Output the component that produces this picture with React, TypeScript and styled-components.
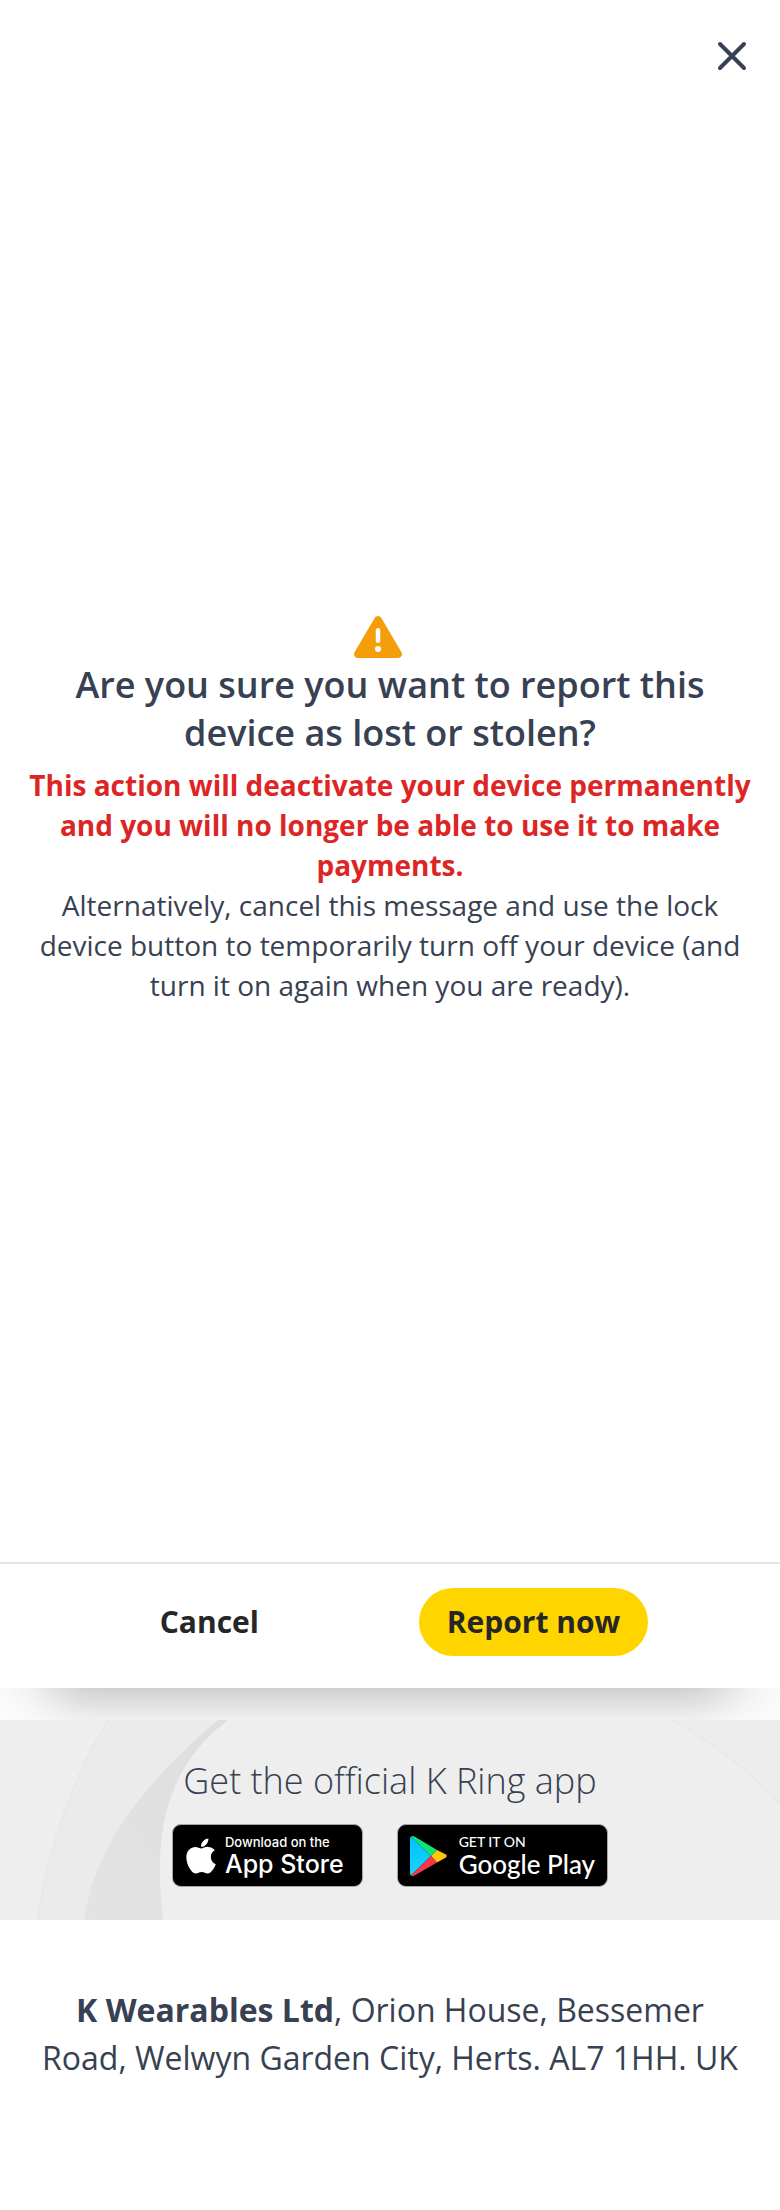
import React from "react";
import styled, { createGlobalStyle } from "styled-components";
import { FaApple } from "react-icons/fa";
import { FaTriangleExclamation } from "react-icons/fa6";

const GlobalStyle = createGlobalStyle`
  *, *::before, *::after { box-sizing: border-box; }
  body {
    margin: 0;
    background: #fff;
    color: #374151;
    font-family: "Open Sans", "Noto Sans", sans-serif;
  }
`;

const Page = styled.div`
  min-height: 100vh;
  display: flex;
  flex-direction: column;
`;

const Dialog = styled.section`
  position: relative;
  flex: 1;
  display: flex;
  flex-direction: column;
  background: #fff;
  box-shadow:
    0 68px 44px -56px rgba(0, 0, 0, 0.2),
    0 20px 64px 0 rgba(0, 0, 0, 0.07);
  clip-path: inset(0 0 -80px 0);
`;

const DialogHeader = styled.header`
  display: flex;
  justify-content: flex-end;
  padding: 32px 24px;
`;

const CloseButton = styled.button`
  display: flex;
  padding: 0;
  border: 0;
  background: none;
  color: #374151;
  cursor: pointer;
`;

const DialogBody = styled.div`
  flex: 1;
  display: flex;
  flex-direction: column;
  align-items: center;
  justify-content: center;
  padding: 0 24px 56px;
  text-align: center;
`;

const WarningIcon = styled(FaTriangleExclamation)`
  margin-right: 24px;
  color: #f59e0b;
`;

const Title = styled.h1`
  margin: 0 0 8px;
  padding: 0 32px;
  font-size: 36px;
  line-height: 48px;
  font-weight: 600;
`;

const Message = styled.p<{ $danger?: boolean }>`
  margin: 0;
  font-size: 28px;
  line-height: 40px;
  font-weight: ${(p) => (p.$danger ? 700 : 400)};
  color: ${(p) => (p.$danger ? "#dc2626" : "inherit")};
`;

const Actions = styled.footer`
  display: flex;
  justify-content: space-evenly;
  padding: 24px 0 32px;
  border-top: 2px solid #e5e5e5;
`;

const ActionButton = styled.button<{ $primary?: boolean }>`
  padding: 12px 28px;
  border: 0;
  border-radius: 34px;
  background: ${(p) => (p.$primary ? "#ffd500" : "transparent")};
  color: #262626;
  font-family: inherit;
  font-size: 30px;
  line-height: 44px;
  font-weight: 700;
  cursor: pointer;
`;

const AppBand = styled.section`
  position: relative;
  display: flex;
  flex-direction: column;
  align-items: center;
  gap: 15px;
  margin-top: 32px;
  padding: 33px 24px;
  background: #eee;
`;

const Backdrop = styled.svg`
  position: absolute;
  inset: 0;
  width: 100%;
  height: 100%;
`;

const BandTitle = styled.h2`
  position: relative;
  margin: 0;
  font-size: 36px;
  line-height: 56px;
  font-weight: 300;
`;

const Badges = styled.div`
  position: relative;
  display: flex;
  gap: 34px;
`;

type Store = "apple" | "google";

const Badge = styled.a<{ $store: Store }>`
  display: flex;
  align-items: center;
  gap: ${(p) => (p.$store === "apple" ? 4 : 11)}px;
  height: 63px;
  padding: ${(p) => (p.$store === "apple" ? "0 18px 0 8px" : "0 12px")};
  border: 1px solid #a6a6a6;
  border-radius: 9px;
  background: #000;
  color: #fff;
  font-family: ${(p) => (p.$store === "apple" ? "Inter" : "Lato")}, sans-serif;
  font-size: ${(p) => (p.$store === "apple" ? 13 : 14)}px;
  font-weight: 500;
  text-decoration: none;
`;

const BadgeText = styled.span`
  display: flex;
  flex-direction: column;
`;

const BadgeSmall = styled.span`
  line-height: 16px;
`;

const BadgeLarge = styled.span<{ $store: Store }>`
  font-size: ${(p) => (p.$store === "apple" ? 25 : 26)}px;
  line-height: 28px;
`;

const Address = styled.address`
  padding: 66px 32px 128px;
  font-size: 32px;
  line-height: 48px;
  font-style: normal;
  text-align: center;
`;

const CloseIcon = () => (
  <svg width="48" height="48" viewBox="0 0 24 24" fill="none" stroke="currentColor" strokeWidth="2" strokeLinecap="round" aria-hidden="true">
    <path d="M6 6l12 12M18 6L6 18" />
  </svg>
);

const PlayLogo = () => (
  <svg width="38" height="42" viewBox="0 0 38 42" aria-hidden="true">
    <defs>
      <linearGradient id="playBlue" x1="0" y1="0" x2="0" y2="1">
        <stop offset="0" stopColor="#00c3ff" />
        <stop offset="1" stopColor="#1bd1fb" />
      </linearGradient>
    </defs>
    <path d="M1 1.500Q0 2 0 4V38Q0 40 1 40.500L21 21Z" fill="url(#playBlue)" />
    <path d="M1 1.500Q2.500 .300 4.500 1.600L27 15L21 21Z" fill="#0be677" />
    <path d="M27 15L35.500 19.300Q38 21 35.500 22.700L27 27.500L21 21Z" fill="#ffc70a" />
    <path d="M1 40.500Q2.500 41.800 4.500 40.500L27 27.500L21 21Z" fill="#f9364a" />
  </svg>
);

const RingBackdrop = () => (
  <Backdrop viewBox="0 0 780 200" preserveAspectRatio="xMidYMid slice" aria-hidden="true">
    <defs>
      <linearGradient id="ringInner" x1="0" y1="1" x2="1" y2="0">
        <stop offset="0" stopColor="#e3e3e3" />
        <stop offset="1" stopColor="#dedede" />
      </linearGradient>
    </defs>
    <path d="M108 0C75 55 48 125 38 200H163C152 110 168 45 228 0Z" fill="#ebebeb" />
    <path d="M108 0C75 55 48 125 38 200" fill="none" stroke="#e8e8e8" strokeWidth="2" />
    <path d="M228 0C168 45 152 110 163 200H84C94 135 130 75 218 0Z" fill="url(#ringInner)" />
    <path d="M672 0Q735 35 780 84V0Z" fill="#ececec" />
    <path d="M672 0Q735 35 780 84" fill="none" stroke="#e9e9e9" strokeWidth="2" />
  </Backdrop>
);

export default function App() {
  return (
    <>
      <GlobalStyle />
      <Page>
        <Dialog role="dialog" aria-labelledby="dialog-title">
          <DialogHeader>
            <CloseButton type="button" aria-label="Close">
              <CloseIcon />
            </CloseButton>
          </DialogHeader>
          <DialogBody>
            <WarningIcon size={48} aria-hidden="true" />
            <Title id="dialog-title">Are you sure you want to report this device as lost or stolen?</Title>
            <Message $danger>
              This action will deactivate your device permanently and you will no longer be able to use it to make
              payments.
            </Message>
            <Message>
              Alternatively, cancel this message and use the lock device button to temporarily turn off your device
              (and turn it on again when you are ready).
            </Message>
          </DialogBody>
          <Actions>
            <ActionButton type="button">Cancel</ActionButton>
            <ActionButton type="button" $primary>
              Report now
            </ActionButton>
          </Actions>
        </Dialog>
        <AppBand>
          <RingBackdrop />
          <BandTitle>Get the official K Ring app</BandTitle>
          <Badges>
            <Badge href="#app-store" $store="apple">
              <FaApple size={40} aria-hidden="true" />
              <BadgeText>
                <BadgeSmall>Download on the</BadgeSmall>
                <BadgeLarge $store="apple">App Store</BadgeLarge>
              </BadgeText>
            </Badge>
            <Badge href="#google-play" $store="google">
              <PlayLogo />
              <BadgeText>
                <BadgeSmall>GET IT ON</BadgeSmall>
                <BadgeLarge $store="google">Google Play</BadgeLarge>
              </BadgeText>
            </Badge>
          </Badges>
        </AppBand>
        <Address>
          <strong>K Wearables Ltd</strong>, Orion House, Bessemer Road, Welwyn Garden City, Herts. AL7 1HH. UK
        </Address>
      </Page>
    </>
  );
}
